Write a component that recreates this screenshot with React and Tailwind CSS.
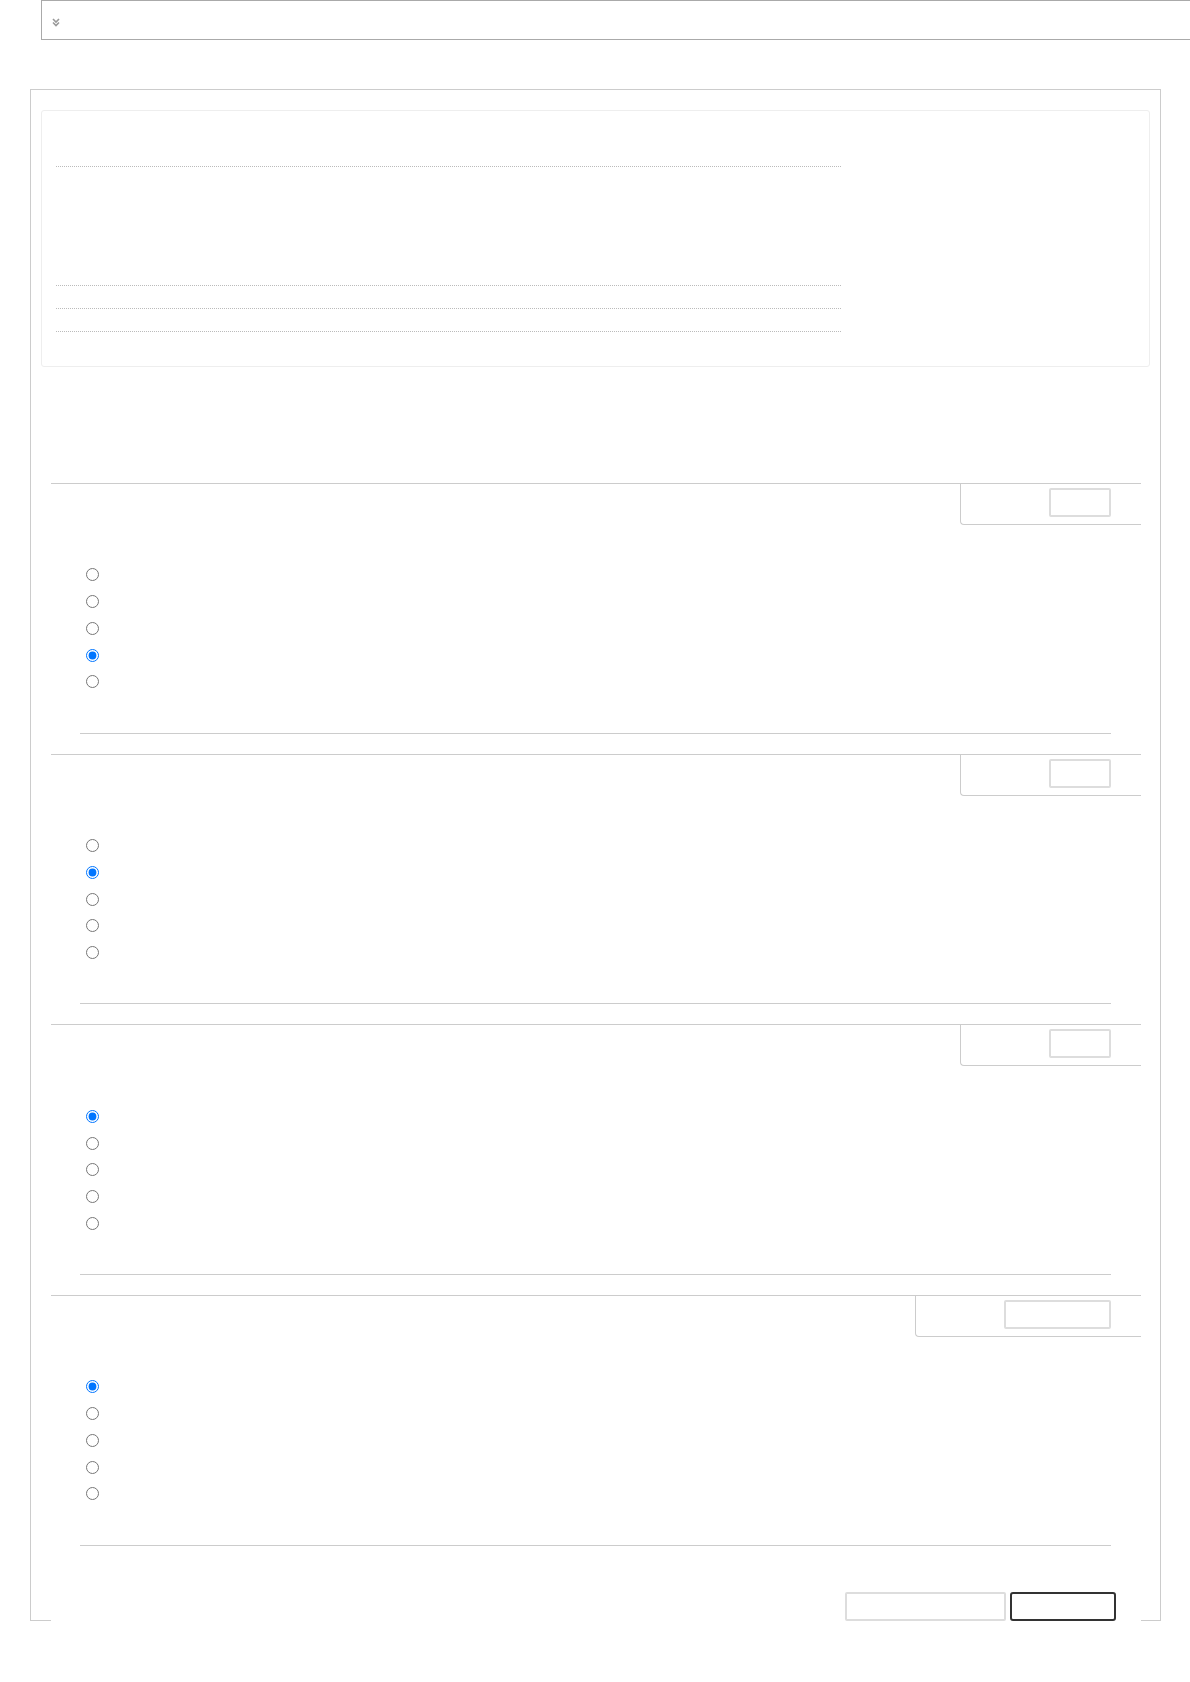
import React from 'react';

const questions = [
  { id: 'q1', checked: 3, boxW: 'w-[181px]', inputW: 'w-[62px]' },
  { id: 'q2', checked: 1, boxW: 'w-[181px]', inputW: 'w-[62px]' },
  { id: 'q3', checked: 0, boxW: 'w-[181px]', inputW: 'w-[62px]' },
  { id: 'q4', checked: 0, boxW: 'w-[226px]', inputW: 'w-[107px]' },
];

const Question = ({ q }) => (
  <div className="w-[1090px] ml-[20px] border-t border-[#ccc]">
    <div className="flex justify-end">
      <div className={`${q.boxW} h-[41px] border-l border-b border-[#ccc] rounded-bl-[4px] flex justify-end`}>
        <div className={`${q.inputW} h-[29px] mt-[4px] mr-[30px] border-2 border-[#ddd] rounded-[2px]`} />
      </div>
    </div>
    <div className="pt-[36.6px] pl-[35px]">
      {[0, 1, 2, 3, 4].map((i) => (
        <div key={i} className="h-[26.75px] flex items-center">
          <input
            type="radio"
            name={q.id}
            defaultChecked={i === q.checked}
            className="w-[13px] h-[13px] m-0"
          />
        </div>
      ))}
    </div>
    <div className="mt-[37.3px] mb-[20px] ml-[29px] w-[1031px] border-t border-[#ccc]" />
  </div>
);

export default function App() {
  return (
    <div className="bg-white min-h-screen overflow-hidden pb-[60px]">
      <div className="ml-[41px] h-[40px] border-y border-l border-[#aaa] pl-[10px] pt-[17px]">
        <svg width="8" height="9" viewBox="0 0 8 9" fill="none" stroke="#999" strokeWidth="1.6">
          <polyline points="1,1 4,4 7,1" />
          <polyline points="1,4.5 4,7.5 7,4.5" />
        </svg>
      </div>

      <div className="mt-[49px] ml-[30px] w-[1131px] border border-[#ccc] pt-[20px]">
        <div className="ml-[10px] w-[1109px] h-[257px] border border-[#eee] rounded-[3px] px-[14px] pt-[55px]">
          <div className="w-[785px] h-[119px] border-t border-dotted border-[#bbb]" />
          <div className="w-[785px] h-[23px] border-t border-dotted border-[#bbb]" />
          <div className="w-[785px] h-[23px] border-t border-dotted border-[#bbb]" />
          <div className="w-[785px] h-[1px] border-t border-dotted border-[#bbb]" />
        </div>

        <div className="h-[116px]" />

        {questions.map((q) => (
          <Question key={q.id} q={q} />
        ))}

        <div className="ml-[20px] w-[1090px] bg-white -mb-px pt-[26px] pr-[25px] flex justify-end gap-[4px]">
          <button className="w-[161px] h-[29px] border-2 border-[#ddd] rounded-[2px] bg-white" />
          <button className="w-[106px] h-[29px] border-2 border-[#333] rounded-[3px] bg-white" />
        </div>
      </div>
    </div>
  );
}
